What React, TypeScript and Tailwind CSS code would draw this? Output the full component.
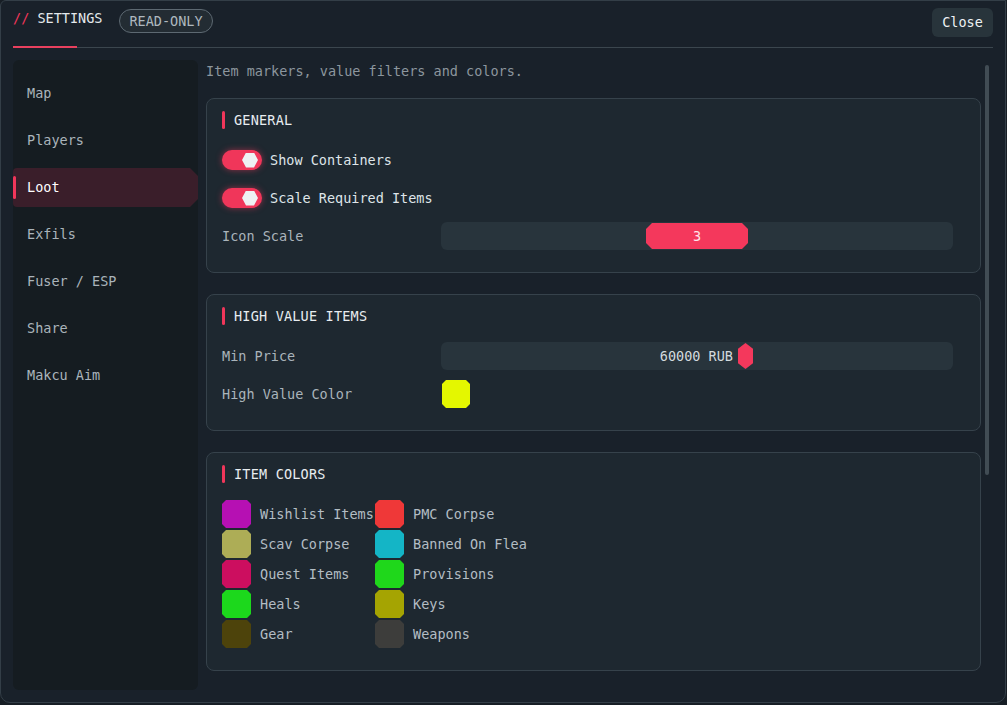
import React from 'react';

const NAV = ['Map', 'Players', 'Loot', 'Exfils', 'Fuser / ESP', 'Share', 'Makcu Aim'];

const COLORS: { label: string; color: string }[] = [
    { label: 'Wishlist Items', color: '#b610b3' },
    { label: 'PMC Corpse', color: '#ef3838' },
    { label: 'Scav Corpse', color: '#adad56' },
    { label: 'Banned On Flea', color: '#14b5c6' },
    { label: 'Quest Items', color: '#cc0e5f' },
    { label: 'Provisions', color: '#1fd71b' },
    { label: 'Heals', color: '#1cd81c' },
    { label: 'Keys', color: '#a5a402' },
    { label: 'Gear', color: '#4d430b' },
    { label: 'Weapons', color: '#3d3d3b' },
];

const CHAMFER = '[clip-path:polygon(6px_0,calc(100%_-_6px)_0,100%_6px,100%_calc(100%_-_6px),calc(100%_-_6px)_100%,6px_100%,0_calc(100%_-_6px),0_6px)]';

const CardTitle: React.FC<{ title: string }> = ({ title }) => (
    <div className="flex items-center h-[18px] mb-[17px]">
        <span className="w-[3px] h-[18px] bg-[#f0365a] rounded-sm"></span>
        <span className="ml-[9px] text-[#e8edf0] tracking-[0.2px]">{title}</span>
    </div>
);

const Toggle: React.FC<{ label: string }> = ({ label }) => (
    <div className="flex items-center h-7">
        <div className="w-[40px] h-[20px] rounded-full bg-[#f0365a] shadow-[0_0_6px_rgba(240,54,90,0.55)] flex items-center justify-end pr-[4px]">
            <div className="w-[16px] h-[15px] bg-[#eef1f3] [clip-path:polygon(25%_0,75%_0,100%_50%,75%_100%,25%_100%,0_50%)]"></div>
        </div>
        <span className="ml-[8px] text-[#dfe5e9]">{label}</span>
    </div>
);

export default function App() {
    return (
        <div className="w-[1007px] h-[705px] bg-[#171e25] font-['DejaVu_Sans_Mono',monospace] text-[13.5px] overflow-hidden">
            <div className="w-[1006px] h-[703px] bg-[#19212a] border border-[#333e47] rounded-b-[10px] rounded-tl-[6px] flex flex-col">
                {/* Header */}
                <div className="flex justify-between items-start px-[12px] h-[45px]">
                    <div className="flex items-start">
                        <span className="mt-[7px] leading-5 text-[#e4e9ec]">
                            <span className="text-[#f0365a]">//</span> SETTINGS
                        </span>
                        <span className="ml-[17px] mt-[8px] h-[24px] px-[9px] flex items-center rounded-full border border-[#5d6972] bg-[#232c33] text-[#aeb8bf]">
                            READ-ONLY
                        </span>
                    </div>
                    <button className="mt-[7px] h-[29px] w-[61px] rounded-md bg-[#28343b] text-[#eef2f4]">Close</button>
                </div>

                {/* Divider */}
                <div className="flex items-center mx-[12px] h-[2px]">
                    <div className="w-[64px] h-[2px] bg-[#e8405e]"></div>
                    <div className="flex-1 h-px bg-[#3b464e]"></div>
                </div>

                {/* Body */}
                <div className="flex mt-[12px] ml-[12px] h-[630px]">
                    {/* Sidebar */}
                    <div className="w-[185px] h-full bg-[#151c21] rounded-md flex flex-col gap-2 pt-[14px]">
                        {NAV.map(n => {
                            const active = n === 'Loot';
                            return (
                                <div
                                    key={n}
                                    className={`h-[39px] flex items-center ${active ? 'bg-[#3a1e2a] text-white rounded-l-[4px] [clip-path:polygon(0_0,calc(100%_-_8px)_0,100%_8px,100%_calc(100%_-_8px),calc(100%_-_8px)_100%,0_100%)]' : 'text-[#aab4bb]'}`}
                                >
                                    {active ? <span className="w-[3px] h-[23px] bg-[#f0365a] rounded-sm"></span> : <span className="w-[3px]"></span>}
                                    <span className="ml-[11px]">{n}</span>
                                </div>
                            );
                        })}
                    </div>

                    {/* Content */}
                    <div className="w-[775px] ml-[8px] h-full overflow-hidden">
                        <div className="pt-px leading-5 text-[#8c969e] mb-[17px]">Item markers, value filters and colors.</div>

                        <div className="flex flex-col gap-[21px]">
                            {/* General */}
                            <div className="bg-[#1e2830] border border-[#36424b] rounded-lg px-[15px] pt-[12px] pb-[22px]">
                                <CardTitle title="GENERAL" />
                                <div className="flex flex-col gap-2.5">
                                    <Toggle label="Show Containers" />
                                    <Toggle label="Scale Required Items" />
                                    <div className="flex items-center h-7">
                                        <span className="w-[219px] text-[#aab4bb]">Icon Scale</span>
                                        <div className="w-[512px] h-7 rounded-md bg-[#28343c] flex items-center">
                                            <div className={`ml-[205px] w-[102px] h-[26px] bg-[#f4385c] flex items-center justify-center text-[#ffe4ea] ${CHAMFER}`}>3</div>
                                        </div>
                                    </div>
                                </div>
                            </div>

                            {/* High value */}
                            <div className="bg-[#1e2830] border border-[#36424b] rounded-lg px-[15px] pt-[12px] pb-[22px]">
                                <CardTitle title="HIGH VALUE ITEMS" />
                                <div className="flex flex-col gap-2.5">
                                    <div className="flex items-center h-7">
                                        <span className="w-[219px] text-[#aab4bb]">Min Price</span>
                                        <div className="w-[512px] h-7 rounded-md bg-[#28343c] flex items-center">
                                            <span className="w-[292px] text-right text-[#d3dade]">60000 RUB</span>
                                            <div className="ml-[5px] w-[15px] h-[26px] bg-[#f4385c] [clip-path:polygon(50%_0,100%_22%,100%_78%,50%_100%,0_78%,0_22%)]"></div>
                                        </div>
                                    </div>
                                    <div className="flex items-center h-7">
                                        <span className="w-[220px] text-[#aab4bb]">High Value Color</span>
                                        <div className="w-[28px] h-7 bg-[#e4f700] [clip-path:polygon(4px_0,calc(100%_-_4px)_0,100%_4px,100%_calc(100%_-_4px),calc(100%_-_4px)_100%,4px_100%,0_calc(100%_-_4px),0_4px)]"></div>
                                    </div>
                                </div>
                            </div>

                            {/* Item colors */}
                            <div className="bg-[#1e2830] border border-[#36424b] rounded-lg px-[15px] pt-[12px] pb-[22px]">
                                <CardTitle title="ITEM COLORS" />
                                <div className="grid grid-cols-[153px_154px] gap-y-[2px]">
                                    {COLORS.map(c => (
                                        <div key={c.label} className="flex items-center h-7 whitespace-nowrap">
                                            <div
                                                className="w-[29px] h-7 shrink-0 [clip-path:polygon(4px_0,calc(100%_-_4px)_0,100%_4px,100%_calc(100%_-_4px),calc(100%_-_4px)_100%,4px_100%,0_calc(100%_-_4px),0_4px)]"
                                                style={{ backgroundColor: c.color }}
                                            ></div>
                                            <span className="ml-[9px] text-[#b3bdc4]">{c.label}</span>
                                        </div>
                                    ))}
                                </div>
                            </div>
                        </div>
                    </div>

                    {/* Scrollbar */}
                    <div className="ml-[4px] pt-[5px]">
                        <div className="w-[4px] h-[410px] rounded-full bg-[#414c54]"></div>
                    </div>
                </div>
            </div>
        </div>
    );
}
